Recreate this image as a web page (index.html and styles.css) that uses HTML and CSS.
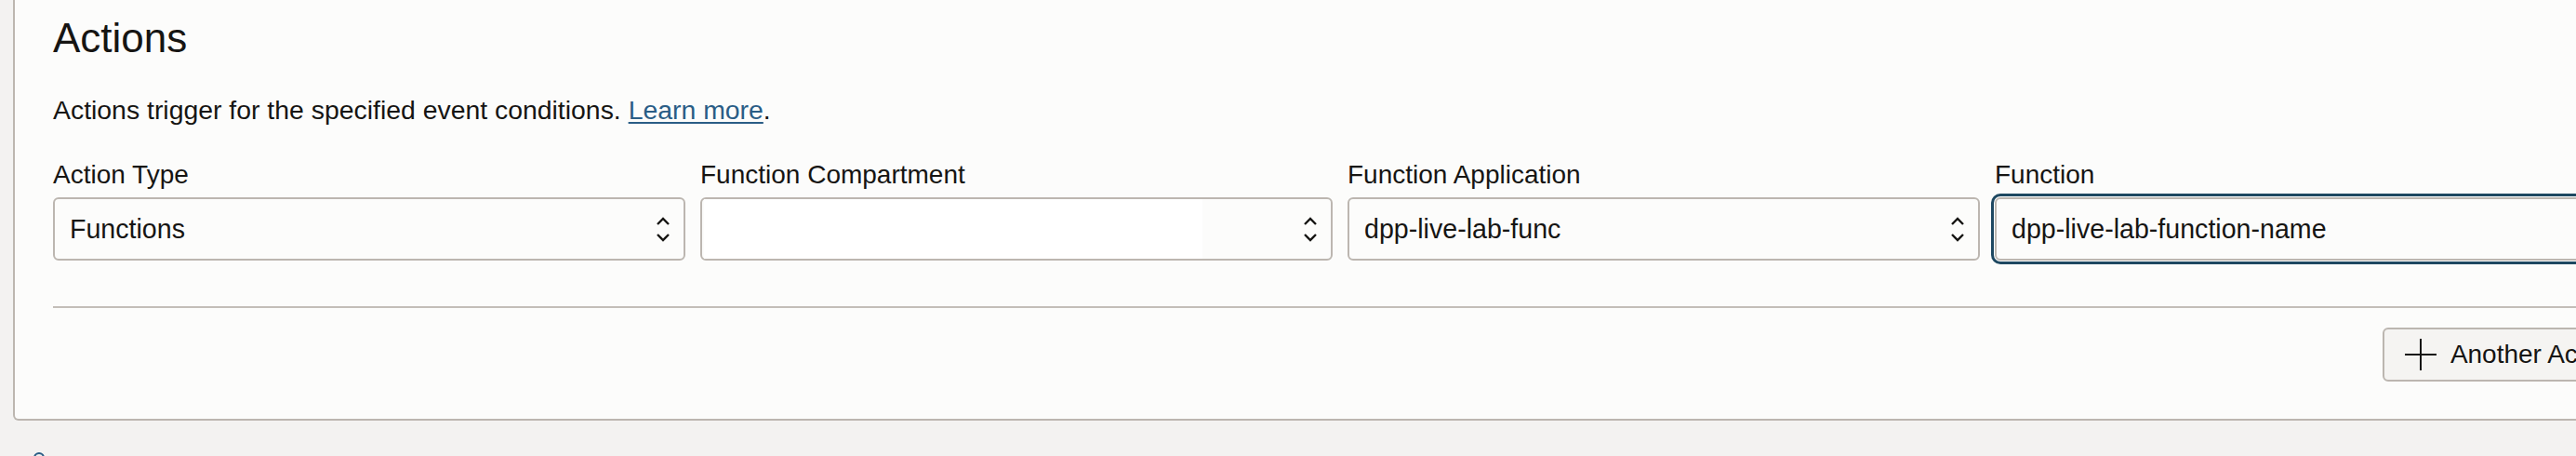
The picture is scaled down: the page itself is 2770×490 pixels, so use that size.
FILE: index.html
```html
<!DOCTYPE html>
<html lang="en">
<head>
<meta charset="utf-8">
<title>Actions</title>
<link rel="stylesheet" href="styles.css">
</head>
<body>
<div class="page">
  <section class="card">
    <h2 class="title">Actions</h2>
    <p class="desc">Actions trigger for the specified event conditions. <a href="#" class="link">Learn more</a>.</p>
    <div class="fields">
      <div class="field">
        <label class="label">Action Type</label>
        <div class="select">
          <span class="value">Functions</span>
          <svg class="chev" width="16" height="28" viewBox="0 0 16 28"><polyline points="2,9 8,3 14,9" fill="none" stroke="#161513" stroke-width="2.4"/><polyline points="2,20 8,26 14,20" fill="none" stroke="#161513" stroke-width="2.4"/></svg>
        </div>
      </div>
      <div class="field">
        <label class="label">Function Compartment</label>
        <div class="select">
          <span class="redact"></span>
          <svg class="chev" width="16" height="28" viewBox="0 0 16 28"><polyline points="2,9 8,3 14,9" fill="none" stroke="#161513" stroke-width="2.4"/><polyline points="2,20 8,26 14,20" fill="none" stroke="#161513" stroke-width="2.4"/></svg>
        </div>
      </div>
      <div class="field">
        <label class="label">Function Application</label>
        <div class="select">
          <span class="value">dpp-live-lab-func</span>
          <svg class="chev" width="16" height="28" viewBox="0 0 16 28"><polyline points="2,9 8,3 14,9" fill="none" stroke="#161513" stroke-width="2.4"/><polyline points="2,20 8,26 14,20" fill="none" stroke="#161513" stroke-width="2.4"/></svg>
        </div>
      </div>
      <div class="field">
        <label class="label">Function</label>
        <div class="select focused">
          <span class="value">dpp-live-lab-function-name</span>
          <svg class="chev" width="16" height="28" viewBox="0 0 16 28"><polyline points="2,9 8,3 14,9" fill="none" stroke="#161513" stroke-width="2.4"/><polyline points="2,20 8,26 14,20" fill="none" stroke="#161513" stroke-width="2.4"/></svg>
        </div>
      </div>
    </div>
    <hr class="divider">
    <div class="actions">
      <button class="btn" type="button">
        <svg class="plus" width="34" height="34" viewBox="0 0 34 34"><path d="M17 0V34M0 17H34" stroke="#161513" stroke-width="2" fill="none"/></svg>
        <span>Another Action</span>
      </button>
    </div>
  </section>
  <div class="next">
    <span class="next-icon"></span>
  </div>
</div>
</body>
</html>
```
FILE: styles.css
```css
html, body {
  margin: 0;
  padding: 0;
  overflow: hidden;
  background: #f3f2f1;
}
body {
  font-family: "Liberation Sans", Arial, sans-serif;
  color: #161513;
  width: 2770px;
  height: 490px;
}
.page {
  padding-left: 14px;
  width: 2920px;
}
.card {
  width: 2870px;
  box-sizing: border-box;
  background: #fcfcfb;
  border: 2px solid #bcb6b0;
  border-top: none;
  border-radius: 0 0 6px 6px;
  padding: 17px 41px 40px 41px;
}
.title {
  margin: 0;
  font-size: 44px;
  line-height: 48px;
  font-weight: normal;
}
.desc {
  margin: 35px 0 0 0;
  font-size: 28.4px;
  line-height: 36px;
}
.link {
  color: #2a5d86;
  text-decoration: underline;
  text-underline-offset: 3px;
}
.fields {
  margin-top: 34px;
  display: grid;
  grid-template-columns: repeat(4, 680px);
  column-gap: 16px;
}
.field {
  display: flex;
  flex-direction: column;
}
.label {
  font-size: 28px;
  line-height: 36px;
  margin-bottom: 6px;
}
.select {
  height: 68px;
  box-sizing: border-box;
  border: 2px solid #bcb6b0;
  border-radius: 6px;
  background: #fcfcfb;
  display: flex;
  align-items: center;
  padding: 0 14px 0 16px;
  font-size: 28.6px;
}
.select .value {
  flex: 1;
}
.select .redact {
  align-self: stretch;
  width: 536px;
  margin-left: -14px;
  background: #ffffff;
  flex: none;
  margin-right: auto;
}
.chev {
  flex: none;
  margin-left: auto;
}
.select.focused {
  box-shadow: 0 0 0 1px #ffffff, 0 0 0 4px #1e4861;
}
.divider {
  margin: 49px 0 0 0;
  border: none;
  height: 2px;
  background: #c3beb8;
}
.actions {
  display: flex;
  justify-content: flex-end;
  margin-top: 21px;
}
.btn {
  height: 58px;
  box-sizing: border-box;
  display: flex;
  align-items: center;
  gap: 15px;
  padding: 0 22px;
  background: #f5f4f2;
  border: 2px solid #bcb6b0;
  border-radius: 6px;
  font-family: "Liberation Sans", Arial, sans-serif;
  font-size: 28px;
  color: #161513;
}
.plus {
  flex: none;
}
.next {
  padding: 34px 0 0 22px;
}
.next-icon {
  display: block;
  width: 8px;
  height: 8px;
  border: 2px solid #2a5d86;
  border-radius: 50%;
}
```
